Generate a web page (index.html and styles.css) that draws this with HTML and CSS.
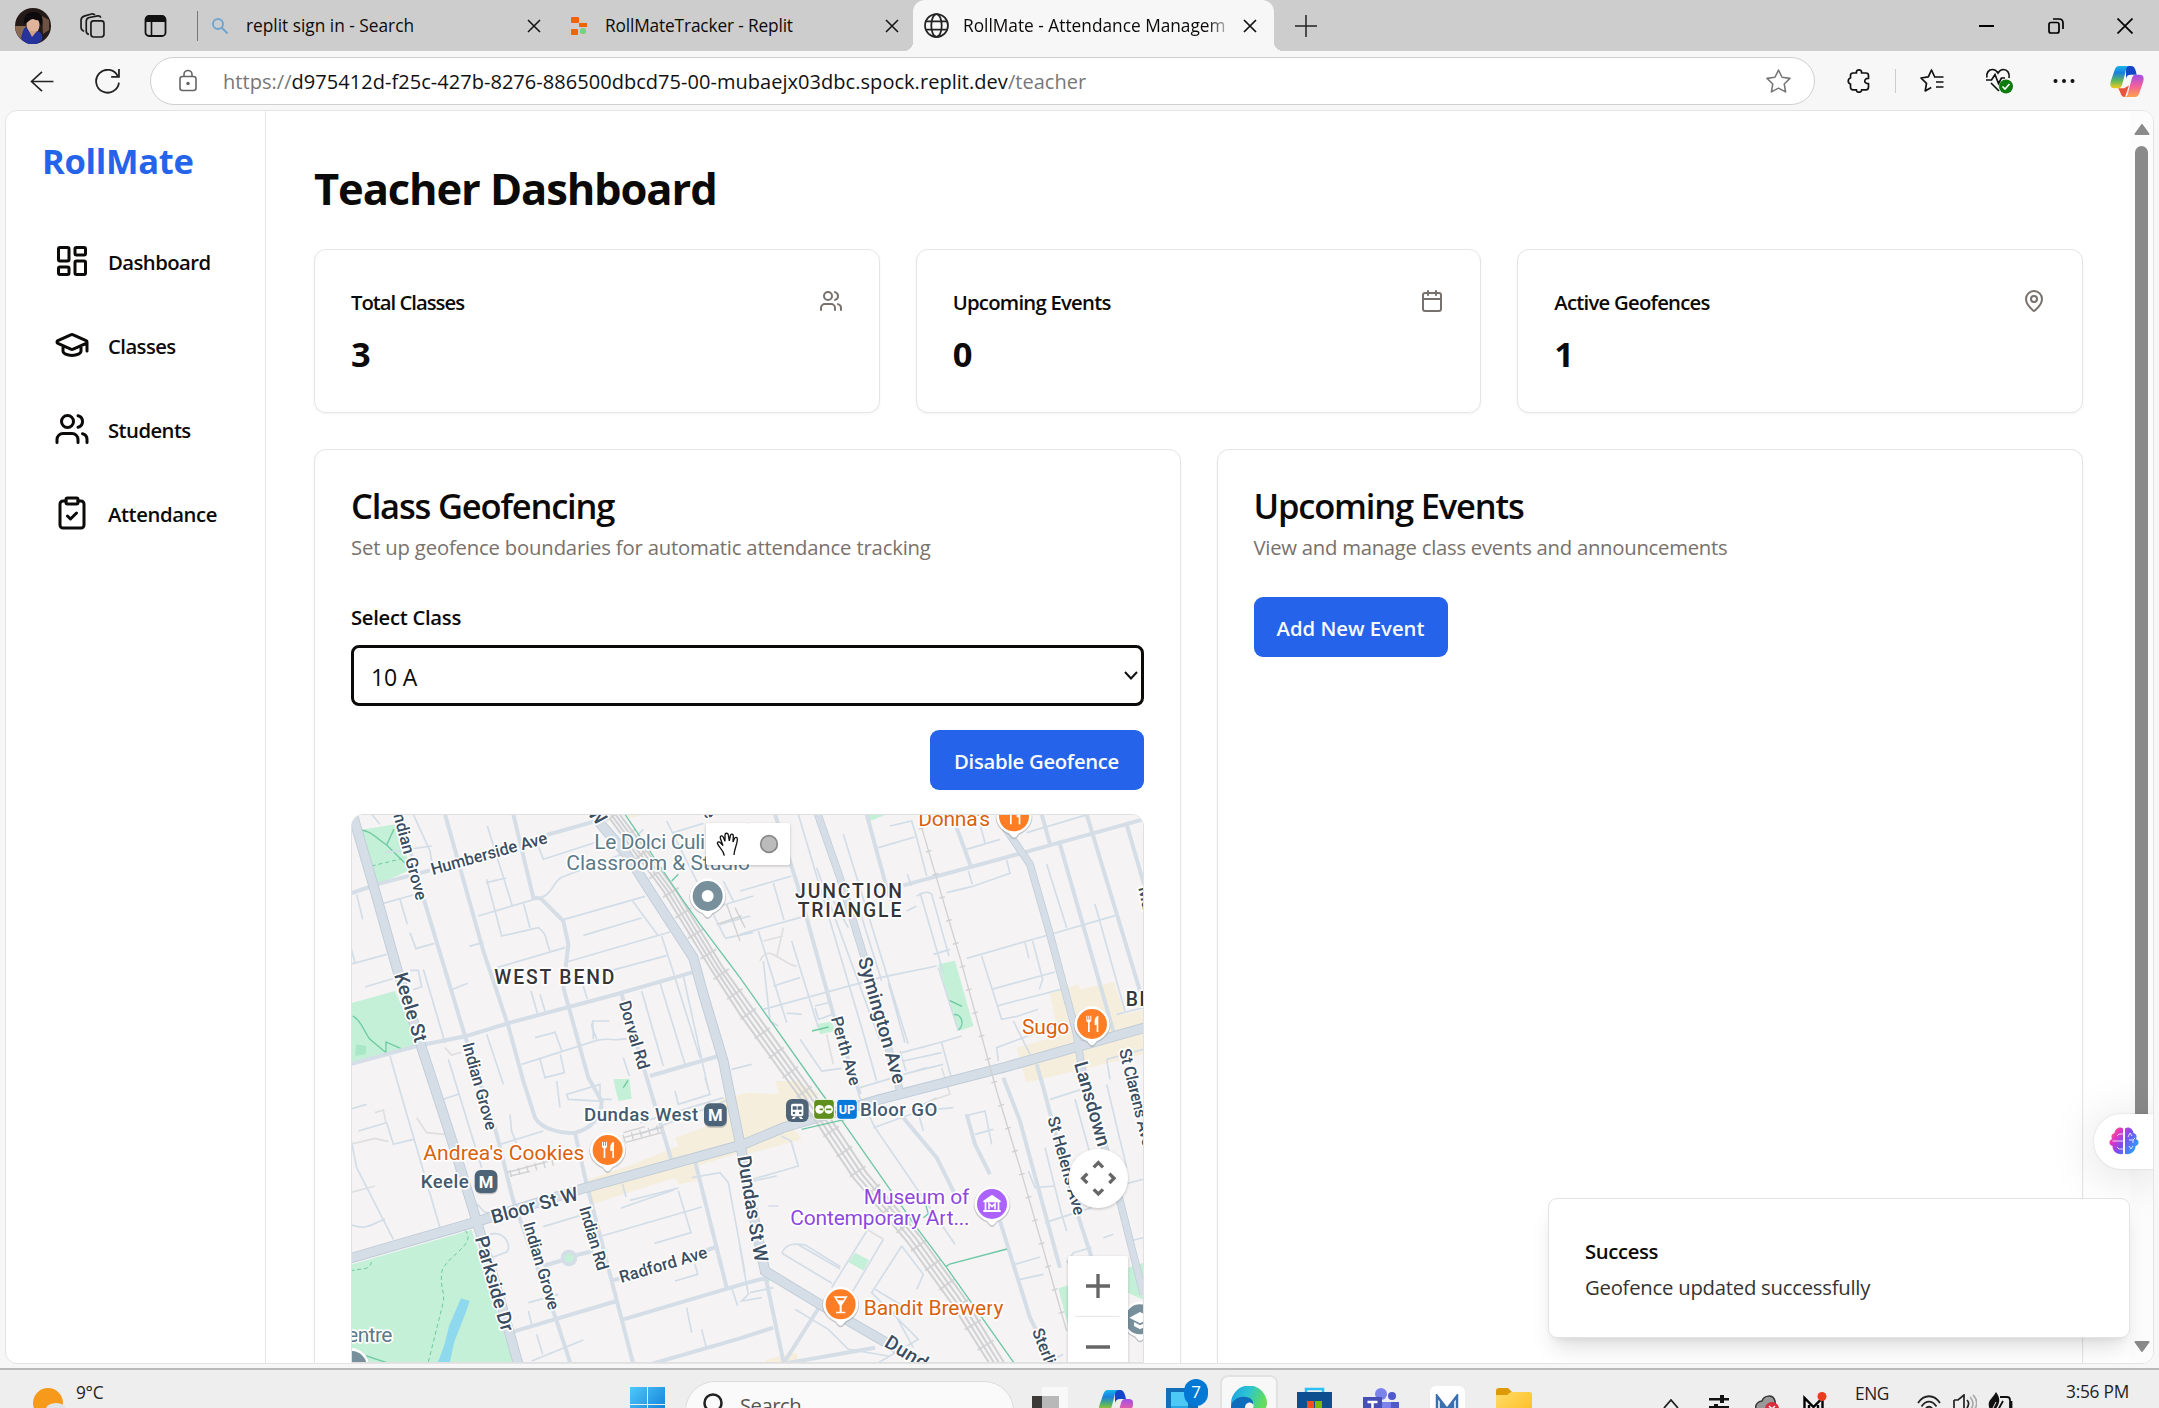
FILE: index.html
```html
<!DOCTYPE html>
<html lang="en">
<head>
<meta charset="utf-8">
<title>RollMate - Attendance Management</title>
<link rel="stylesheet" href="styles.css">
</head>
<body>
<svg class="defs" width="0" height="0">
  <defs>
    <linearGradient id="cpA" x1="0" y1="0" x2="0" y2="1"><stop offset="0" stop-color="#18b5e8"/><stop offset=".3" stop-color="#1a7fe0"/><stop offset=".65" stop-color="#5cb85c"/><stop offset="1" stop-color="#f4c81c"/></linearGradient>
    <linearGradient id="cpB" x1="0" y1="0" x2="0" y2="1"><stop offset="0" stop-color="#a04fe8"/><stop offset=".5" stop-color="#f0609c"/><stop offset="1" stop-color="#ffa14a"/></linearGradient>
    <linearGradient id="brain" x1="0" y1="0" x2="1" y2=".6"><stop offset="0" stop-color="#f98b2b"/><stop offset=".3" stop-color="#e935c1"/><stop offset=".6" stop-color="#7b4df0"/><stop offset="1" stop-color="#2f9bff"/></linearGradient>
    <linearGradient id="win" x1="0" y1="0" x2="1" y2="1"><stop offset="0" stop-color="#4cc8fb"/><stop offset="1" stop-color="#0a74d2"/></linearGradient>
    <linearGradient id="edge" x1="0" y1="0" x2="1" y2=".3"><stop offset="0" stop-color="#1b9de0"/><stop offset=".5" stop-color="#2cc4d4"/><stop offset="1" stop-color="#62dd5c"/></linearGradient>
    <linearGradient id="folder" x1="0" y1="0" x2="1" y2="1"><stop offset="0" stop-color="#ffdc6b"/><stop offset="1" stop-color="#fdb913"/></linearGradient>
    <symbol id="copilot" viewBox="0 0 34 32">
      <path d="M16 0h5c3 0 4 2 5 5l1 4h-6c-3 0-4 1-5 4z" fill="#1546c8"/>
      <path d="M9 0h10c-3 1-3 4-4 8l-3 11c-1 3-2 4-5 4H4c-4 0-5-3-3.500-8L4 5c1-3 2-5 5-5z" fill="url(#cpA)"/>
      <path d="M8 23h6l5-3-4 12c-3 0-4-2-5-5z" fill="#e8553c"/>
      <path d="M26 9h4c4 0 5 3 3.500 8L30 27c-1 3-2 5-5 5H15c3-1 3-4 4-8l3-11c1-3 2-4 4-4z" fill="url(#cpB)"/>
    </symbol>
    <symbol id="users" viewBox="0 0 24 24"><path d="M16 21v-2a4 4 0 0 0-4-4H6a4 4 0 0 0-4 4v2"/><circle cx="9" cy="7" r="4"/><path d="M22 21v-2a4 4 0 0 0-3-3.870M16 3.130a4 4 0 0 1 0 7.750"/></symbol>
    <symbol id="close" viewBox="0 0 14 14"><path d="M1 1l12 12M13 1L1 13"/></symbol>
    <symbol id="fork" viewBox="0 0 46 52"><path d="M6 1v13c0 4 2 6 5 7v29h5V21c3-1 5-3 5-7V1h-3v12h-3V1h-3v12H9V1z" fill="#fff"/><path d="M42 1c-7 2-11 8-11 16v12h6v21h5z" fill="#fff"/></symbol>
    <g id="pin"><path d="M0 66c-7 0-10-7-16-14C-40 42-55 22-55 0A55 55 0 0 1 55 0C55 22 40 42 16 52 10 59 7 66 0 66z" fill="#8a8f94" opacity=".45" transform="translate(0 3)"/><path d="M0 64c-6 0-9-7-15-13C-38 42-53 22-53 0A53 53 0 0 1 53 0C53 22 38 42 15 51 9 57 6 64 0 64z" fill="#fff"/></g>
  </defs>
</svg>

<header class="tabstrip">
  <svg class="avatar" viewBox="0 0 36 36"><circle cx="18" cy="18" r="18" fill="#241a18"/><path d="M0 18a18 18 0 0 0 7 14l4-14z" fill="#8a6a52"/><path d="M27 8l7 4v10l-6 4z" fill="#6d5244"/><ellipse cx="18" cy="17" rx="6.500" ry="9" fill="#e0b49a"/><path d="M9 16c-1-9 4-12 10-12 7 0 10 6 8 14-2-2-3-5-4-6-2 1-3-1-5-1-3 0-4 3-9 5z" fill="#0c0a0c"/><path d="M6 30c2-7 3-12 6-10l5 8 4-5c5 0 7 4 6 9-5 6-15 7-21-2z" fill="#25339a"/><path d="M14 23l3 6 5-6z" fill="#d3a189"/></svg>
  <svg class="workspaces" viewBox="0 0 24 24" fill="none" stroke="#1b1b1b" stroke-width="1.600"><rect x="10.500" y="7.500" width="12.500" height="15.500" rx="2.500"/><path d="M8.500 20.500C6.500 20 6 19 6 17.500V8c0-2 1-3.300 3-3.700l8-1.500c1.500-.2 2.500.4 3 1.700"/><path d="M4 17.500C2 17 1 16 1 14V7c0-2 1-3.300 3-4l7-2c1.600-.3 2.600 0 3.300 1"/></svg>
  <svg class="tabmenu" viewBox="0 0 22 22"><rect x="1" y="1" width="20" height="20" rx="3.500" fill="none" stroke="#111" stroke-width="1.800"/><path d="M1 7V4.500C1 2 2 1 4.500 1h13C20 1 21 2 21 4.500V7z" fill="#111"/><path d="M7 7v14" stroke="#111" stroke-width="1.600"/></svg>
  <i class="strip-div"></i>
  <div class="tab tab1">
    <svg class="fav16" viewBox="0 0 16 16" fill="none" stroke="#6fa5d0" stroke-width="2"><circle cx="6" cy="6" r="5"/><path d="M9.500 9.500l6 6"/></svg>
    <span class="t-tab1">replit sign in - Search</span>
    <svg class="x" stroke="#111" stroke-width="1.500"><use href="#close"/></svg>
  </div>
  <div class="tab tab2">
    <svg class="fav16" viewBox="0 0 16 18"><rect x="0" y="0" width="8" height="6" rx="1" fill="#f26207"/><rect x="8" y="6" width="8" height="4" fill="#f26207"/><rect x="0" y="12" width="7" height="6" rx="1" fill="#f26207"/><rect x="9" y="11" width="6" height="6" rx="2.500" fill="#6bd77c"/></svg>
    <span class="t-tab2">RollMateTracker - Replit</span>
    <svg class="x" stroke="#111" stroke-width="1.500"><use href="#close"/></svg>
  </div>
  <div class="tab tab3">
    <svg class="globe" viewBox="0 0 24 24" fill="none" stroke="#222" stroke-width="1.700"><circle cx="12" cy="12" r="11"/><ellipse cx="12" cy="12" rx="5" ry="11"/><path d="M2 8h20M2 16h20"/></svg>
    <span class="t-tab3">RollMate - Attendance Managem</span>
    <svg class="x" stroke="#111" stroke-width="1.700"><use href="#close"/></svg>
  </div>
  <svg class="plus" viewBox="0 0 22 22" stroke="#222" stroke-width="1.500"><path d="M0 11h22M11 0v22"/></svg>
  <div class="winbtns">
    <svg viewBox="0 0 16 16" stroke="#000" stroke-width="2"><path d="M0 8h15"/></svg>
    <svg viewBox="0 0 16 16" fill="none" stroke="#000" stroke-width="1.700"><rect x="1" y="4.500" width="10" height="10.500" rx="2"/><path d="M5 1h6c3 0 4 1.500 4 4v6"/></svg>
    <svg viewBox="0 0 16 16" stroke="#000" stroke-width="1.700"><path d="M.5.500l15 15M15.500.500l-15 15"/></svg>
  </div>
</header>

<div class="toolbar">
  <svg class="back" viewBox="0 0 24 22" fill="none" stroke="#222" stroke-width="1.700"><path d="M24 11H1M12 1L1 11l11 10"/></svg>
  <svg class="reload" viewBox="0 0 24 24" fill="none" stroke="#222" stroke-width="1.700"><path d="M22 7A11 11 0 1 0 23 13M23 0v7.500h-7.500"/></svg>
  <div class="omnibox">
    <svg class="lock" viewBox="0 0 18 22" fill="none" stroke="#666" stroke-width="1.600"><rect x="1" y="7" width="16" height="14" rx="2.500"/><path d="M5 7V5a4 4 0 0 1 8 0v2"/><circle cx="9" cy="14" r="1" fill="#666"/></svg>
    <span class="url"><em>https://</em>d975412d-f25c-427b-8276-886500dbcd75-00-mubaejx03dbc.spock.replit.dev<em>/teacher</em></span>
    <svg class="star" viewBox="0 0 24 24" fill="none" stroke="#777" stroke-width="1.500" stroke-linejoin="round"><path d="M12 1l3.400 6.900 7.600 1.100-5.500 5.400 1.300 7.600L12 18.400 5.200 22l1.300-7.600L1 9l7.600-1.100z"/></svg>
  </div>
  <svg class="tb puzzle" viewBox="0 0 24 24" fill="none" stroke="#111" stroke-width="1.700" stroke-linejoin="round"><path d="M6 4h3.500c-1-4.200 6-4.200 5 0H19c1.500 0 2.500 1 2.500 2.500V9.500c-5-.8-5 5.800 0 5V18c0 1.800-1 2.800-2.500 2.800h-4.500c.8 3.200-5.800 3.200-5 0H6c-1.500 0-2.500-1-2.500-2.500V15c-3-.6-3-5.400 0-6V6.500C3.500 5 4.500 4 6 4z"/></svg>
  <i class="tb-div"></i>
  <svg class="tb favs" viewBox="0 0 24 24" fill="none" stroke="#111" stroke-width="1.700" stroke-linejoin="round"><path d="M14.500 7.500L11.500 1 8.300 7.900 1 9l5.500 5.400L5.200 22l6-3.500M14 8h9.500M16 13h7.500M16 18h7.500"/></svg>
  <svg class="tb heart" viewBox="0 0 28 26" fill="none" stroke="#111" stroke-width="1.700"><path d="M2 9.500C1 4.500 4 1.500 7.500 1.500c2.500 0 4 1 5.500 3.500 1.500-2.500 3-3.500 5.500-3.500C22 1.500 25 4.500 24 10M6 15l8 8M1 12h5.500L10 6.500l3.500 9L16.500 10H20"/><circle cx="21" cy="18.500" r="7" fill="#0f7b0f" stroke="none"/><path d="M17.500 18.500l2.500 2.500 4.500-5" stroke="#fff" stroke-width="1.600"/></svg>
  <svg class="tb dots" viewBox="0 0 22 22" fill="#111"><circle cx="2.500" cy="11" r="2"/><circle cx="11" cy="11" r="2"/><circle cx="19.500" cy="11" r="2"/></svg>
  <svg class="cop"><use href="#copilot"/></svg>
</div>

<div class="stage">
  <div class="page">
    <aside class="sidebar">
      <div class="logo">RollMate</div>
      <nav>
        <a class="nav"><svg viewBox="0 0 24 24"><rect width="7" height="9" x="3" y="3" rx="1"/><rect width="7" height="5" x="14" y="3" rx="1"/><rect width="7" height="9" x="14" y="12" rx="1"/><rect width="7" height="5" x="3" y="16" rx="1"/></svg><span class="n1">Dashboard</span></a>
        <a class="nav"><svg viewBox="0 0 24 24"><path d="M21.420 10.922a1 1 0 0 0-.019-1.838L12.830 5.180a2 2 0 0 0-1.660 0L2.600 9.080a1 1 0 0 0 0 1.832l8.570 3.908a2 2 0 0 0 1.660 0zM22 10v6M6 12.500V16a6 3 0 0 0 12 0v-3.500"/></svg><span class="n1">Classes</span></a>
        <a class="nav"><svg><use href="#users"/></svg><span class="n1">Students</span></a>
        <a class="nav"><svg viewBox="0 0 24 24"><rect width="8" height="4" x="8" y="2" rx="1"/><path d="M16 4h2a2 2 0 0 1 2 2v14a2 2 0 0 1-2 2H6a2 2 0 0 1-2-2V6a2 2 0 0 1 2-2h2M9 14l2 2 4-4"/></svg><span class="n2">Attendance</span></a>
      </nav>
    </aside>
    <main>
      <h1>Teacher Dashboard</h1>
      <section class="stats">
        <div class="card stat"><div class="stat-h"><span class="s1">Total Classes</span><svg><use href="#users"/></svg></div><b>3</b></div>
        <div class="card stat"><div class="stat-h"><span>Upcoming Events</span><svg viewBox="0 0 24 24"><path d="M8 2v4M16 2v4M3 10h18"/><rect width="18" height="18" x="3" y="4" rx="2"/></svg></div><b>0</b></div>
        <div class="card stat"><div class="stat-h"><span>Active Geofences</span><svg viewBox="0 0 24 24"><path d="M20 10c0 4.993-5.539 10.193-7.399 11.799a1 1 0 0 1-1.202 0C9.539 20.193 4 14.993 4 10a8 8 0 0 1 16 0"/><circle cx="12" cy="10" r="3"/></svg></div><b>1</b></div>
      </section>
      <section class="panels">
        <div class="card panel">
          <h2>Class Geofencing</h2>
          <p class="p1">Set up geofence boundaries for automatic attendance tracking</p>
          <label>Select Class</label>
          <div class="select"><span>10 A</span><svg viewBox="0 0 14 9" fill="none" stroke="#111" stroke-width="2"><path d="M1 1l6 6.500L13 1"/></svg></div>
          <button class="btn disable">Disable Geofence</button>
          <div class="map">
<svg viewBox="3 39 2379 1647" preserveAspectRatio="xMinYMin slice">
<rect x="0" y="0" width="2400" height="1700" fill="#f5f3f4"/>
<g fill="#f6eedc">
<path d="M700 1140L850 1090 985 1035 975 1010 1100 965 1110 890 1200 875 1290 880 1350 840 1372 905 1310 965 1345 1000 1355 1015 1190 1060 1185 1050 1040 1095 1040 1140 985 1150 975 1130 725 1210z"/>
<path d="M2100 578L2185 550 2190 565 2292 543 2325 640 2380 625 2380 760 2050 840 2028 842 2020 810 2000 740 2125 705z"/>
<path d="M1275 840L1340 840 1410 880 1300 920zM1250 1675l90-20 5 30h-95zM828 40h60l-50 12z"/>
</g>
<g fill="#c3f0d6">
<path d="M30 87L135 70 185 205 85 250zM0 608L135 570 212 735 0 792zM0 1392L365 1286 490 1686 0 1686zM790 835l48-2 7 60-40 7zM1765 490l50-11 55 196-45 15zM1555 40h55l-55 22zM1402 668l43-6 10 28-45 10zM2125 1462l45-14-10 150zM2335 1400l45-14v110l-45-20zM1515 1355l42 22-16 32-45-25zM1250 1425l25 5-22 14z"/>
</g>
<path d="M333 1492l26 8-10 30-36 92-14 64h-36l20-54 15-60z" fill="#8fd9ee"/>
<path d="M18 730l30 5v25l-32 5z" fill="#a8e8c6"/>
<g fill="none" stroke="#6cc9a2" stroke-width="4">
<path d="M30 87c30 0 50 25 80 45l55 55M110 132l22-48M8 645c25 10 35 50 52 70l48 40v-32l50 22M820 860l14-22M1798 598l38 18M1808 642c25-10 40 30 15 46M1386 690l50-12M0 1648l110 37"/>
<path d="M65 195l90-22M345 1288c40 40-60 80-70 125-5 50 10 60 5 90l-45 180M0 1410c40-10 60 0 65-30" stroke-dasharray="12 9" stroke-width="3"/>
</g>
<g fill="none" stroke="#d2dde7" stroke-width="5">
<path d="M65 40L90 70M190 40l50 110 5 30M105 155l140-20M20 280l18 75M0 430l15 55M0 490l110-30M100 307l100-28M150 295l22 75M180 395l18 48 55-16M45 558l100-30M180 508h25l10 50-25 8M220 505l65 220M308 565l45-18M358 436l42-12M412 75l75 240M408 245l60-14M385 345l175-52M410 235l45 170 110-25c30 20 20 40 35 70M440 500l205-60M520 305l20 75M555 295c60-10 50-60 90-70l170-65M555 110l25 65 170-55M640 356l245-70M650 483l310-90M700 403l175-52M848 300l75 102M935 405l38 118M785 508l165-44M543 570l20 70M570 580l15 50M700 555l12 40M875 570l65 225M930 545l75 245M975 530l75 240M1000 525l75 340"/>
<path d="M730 715l-2-55h50M740 715c-10-30-20-40-12-50M515 790l225-72c60-10 30 5 90-5M555 710l60-16 22 60M570 775l15 55 58-15-12-55M820 770l18 55M410 700l50 150M1145 805l60-15M0 1000l20 100 110 215M120 765l30 105 120 410M295 775l100 325M25 990l85-25 20 65 60-15M280 895l45-15M0 925l50-15M0 1270c50 20 60 0 105-15M480 940l5 50 15 40M450 1030l130-40M545 1680l155-63M560 1600l18 60M535 1505l90-25M535 1530l10 40"/>
<path d="M745 895h40M650 880l100-30v50l-95-5zM620 840l10 80M975 870l10 40 95-30-15-50M870 1000l280-110M870 965l250-75M840 1198l145-37M812 1222l70-25 90-30M818 1150l10 38M985 1170l38 125-110 32M745 1308l310-90M580 1277l110-33M1025 1130l85-15 25 30 50 270M975 1440l68-20-8-30M1010 1520l15 75M1055 1585l15 60M1145 1460l18 55M420 1300c50-15 70 50 45 55l-40 15M380 1210c20 10 10 30 50 25"/>
<path d="M880 85l-60 60M970 95l90-28M950 60L1100 360l25 50M1110 315l100-30M1120 240l30 60M1110 370l90-25M1125 412l85-18"/>
<path d="M1170 270l155-45M1270 245l32 112M1170 400l190-53M1225 390l85 275M1240 480l20 180 25 15M1270 555l80-25M1240 625l350-95 170-35M1325 420l80 260M1310 637l20 0 25 3M1350 715l65 95 60-8M1395 620l10 35 45-15M1395 615l50-12M1345 40l190 640 45 160M1400 200l190 520M1450 300l45 80M1480 100l195 630M1520 300l75 240M1620 75l65-15 15 50 30 115M1585 140l110-32M1700 285c25-12 35-15 45-5l52 185M1710 275l70 240M1672 220l12 35M1750 460l50-15M1670 330l30-15M1790 275l75-18 115-40-10-40M1855 210l12 40M1850 145l100-30M1890 70l15 55M2030 95l175-52M2090 190l60 190M2235 310l90 320M1850 472l245-70 200-58M1895 465l60 190 50-10 60-20M1925 565l190-52M1940 615l205-53M2025 425l12 48M2048 420l30 115-10 30M1945 780l-5-40 200-75M1990 660l50 100M1655 755l120-32 60-18M1660 780l115-25M1680 815l100-25M1650 750l18 60M1765 500l60 190M1615 545l50 180M1530 860l200-60M1775 725l30 110M2300 640l80-20M2270 775l110-30M2270 775l10 60"/>
<path d="M1525 880l50 100 240 350M1570 980l140-50 100-10M1190 1140l155-45-22-75-30-15M1760 890l-60 30 20 70M1845 945l60-15 20 100M1875 1000l55-15M2100 895l95-30M2035 1110l20 50 60-5M2085 1040l50 200 15 50M2085 1265l140-45M2175 895l55 200M2270 850l60 250M1995 1390l75-22M2010 1435l70-15M2080 1690l60-30M2320 1150l60-15M2260 1310l30-10M2340 1320l40-10M2150 1385l20-30 55-15"/>
<path d="M1296 1357c10-30 40-30 70-25l105 65M1296 1357l150 90M1340 1328l130 75M1550 1290l-105 170M1600 1315l-100 170-55-20M1655 1335l-90 140 140 140-120 70M1655 1335l65 85-20 45M1575 1465l100 60M1335 1525l100 60 60 60 120 20M1630 1530l60 110M1170 1340l25 140-20 20 60-10M1200 1475l70-15M1210 1140l70-15M1255 1215h30"/>
</g>
<g fill="none" stroke="#dedfe0" stroke-width="5"><path d="M75 935l25-8 8 40M200 950l30 45 55 5M0 1030l75-18 40 10M0 1175l75-20M285 740l20 22 28-8M1230 480c25-60 70 15 110 15M1280 470l20-90M1240 420l60-15M1430 700l20 90M1775 800l25 80-60 20M1550 1285l50 30"/></g>
<g fill="none" stroke="#d5dee6" stroke-width="12">
<path d="M0 790L200 735 350 705 480 665 780 585 1035 512M0 278L80 250 240 208M590 102L745 58M150 40L220 290 345 705 440 1000 490 1200 620 1560 662 1690M285 40L400 450 475 675 520 840 555 950C575 985 640 1000 675 995M490 40L550 290 572 292 640 360 655 430 640 560 715 830 755 900C755 950 720 985 675 995L710 1150 850 1690M815 580L965 1080 1035 1080 1130 1460M900 825L1105 765M490 1592L800 1500M820 1555L1175 1450 1250 1430M900 1690L1170 1612 1270 1580M1245 1420L1302 1690M1410 1515L1305 1680M780 1440l30-8M1060 1350l40-12M580 1395l60-18M680 1362l50-12"/>
<path d="M1275 40L1345 260 1450 640 1530 880M1550 40L1610 260 1625 300M1660 253L2020 155 2380 55M1820 80L1862 195M2075 40L2100 130M2130 130L2290 690M2210 40L2370 570M2330 70L2382 250M1960 830L2010 960 2130 1400M2060 790L2080 860 2170 1200 2225 1370M1660 950L1760 1070 1815 1180M1850 940L1875 1030 1920 1120M1950 1260L1990 1390 2040 1550 2110 1690M1290 1690L1575 1640"/>
</g>
<g fill="none" stroke="#bdcad6"><path stroke-width="31" d="M5 30L75 270 140 500 215 740 300 1000 380 1260 440 1460 505 1690M740 55L830 160 900 270 1030 470 1060 580 1120 780 1140 880 1172 1035 1210 1240 1245 1410 1410 1510 1600 1620 1740 1700M0 1372L380 1262 690 1165 1180 1030 1300 980 1590 895 1970 797 2385 680"/><path stroke-width="23" d="M1400 30L1470 230 1540 460 1650 870M1965 80L2040 190 2100 400 2180 700 2195 800 2310 1200 2380 1480"/></g>
<g fill="none" stroke="#d5dee6" stroke-linejoin="round"><path stroke-width="26" d="M5 30L75 270 140 500 215 740 300 1000 380 1260 440 1460 505 1690M740 55L830 160 900 270 1030 470 1060 580 1120 780 1140 880 1172 1035 1210 1240 1245 1410 1410 1510 1600 1620 1740 1700M0 1372L380 1262 690 1165 1180 1030 1300 980 1590 895 1970 797 2385 680"/><path stroke-width="19" d="M1400 30L1470 230 1540 460 1650 870M1965 80L2040 190 2100 400 2180 700 2195 800 2310 1200 2380 1480"/></g>
<circle cx="657" cy="1371" r="19" fill="#c3f0d6" stroke="#d5dee6" stroke-width="12"/>
<g fill="none" stroke="#d0d1d2" stroke-width="6">
<path d="M770 40L940 270 1080 500 1170 640 1350 890 1510 1130 1670 1320 1800 1500 1920 1690M783 40L953 270 1093 500 1183 635 1363 885 1523 1125 1683 1315 1813 1495 1935 1690M796 40L966 270 1106 500 1196 630 1376 880 1536 1120 1696 1310 1826 1490 1950 1690M809 40L979 270 1119 500 1209 625 1389 875 1549 1115 1709 1305 1839 1485 1965 1690"/>
<path stroke-width="56" stroke-dasharray="6 66" opacity=".8" d="M790 40L960 270 1100 500 1190 632 1370 882 1530 1122 1690 1312 1820 1492 1942 1690"/>
<g stroke-width="4"><path d="M1715 80L1830 470 1940 870 2010 1100 2150 1590"/><path stroke-width="18" stroke-dasharray="4 68" d="M1715 80L1830 470 1940 870 2010 1100 2150 1590"/>
<path d="M470 1115l140-38M480 1125l60-14M820 1010l120-32M825 1025l110-30M820 995l65-18M1100 370l75-25M1130 310l40 110M1155 320l30 60"/>
<path stroke-width="22" stroke-dasharray="4 22" d="M480 1118l130-35M820 1012l120-32"/></g>
</g>
<path d="M825 40L990 285 1050 370 1170 530 1410 870 1480 965 1700 1280 1790 1400 1995 1690M1787 1397l12-8 172-45M1355 985l130-30M965 240l20-20M1720 1250l15-12-18-60" fill="none" stroke="#6fc7a5" stroke-width="4"/>

<g class="lbl road">
<text class="sm" transform="translate(248 222) rotate(-15.500)" textLength="360">Humberside Ave</text>
<text class="sm" transform="translate(126 28) rotate(75)" textLength="282">Indian Grove</text>
<text class="lg" transform="translate(132 522) rotate(73)" textLength="215">Keele St</text>
<text class="sm" transform="translate(337 730) rotate(74.500)" textLength="270">Indian Grove</text>
<text class="sm" transform="translate(806 605) rotate(73.500)" textLength="212">Dorval Rd</text>
<text class="lg" transform="translate(1523 475) rotate(74)" textLength="392">Symington Ave</text>
<text class="sm" transform="translate(1442 652) rotate(74)" textLength="213">Perth Ave</text>
<text class="lg" transform="translate(2172 788) rotate(74)" textLength="262">Lansdown</text>
<text class="sm" transform="translate(2307 748) rotate(76)" textLength="300">St Clarens Ave</text>
<text class="sm" transform="translate(2092 952) rotate(74.500)" textLength="304">St Helens Ave</text>
<text class="lg" transform="translate(430 1268) rotate(-15.500)" textLength="268">Bloor St W</text>
<text class="lg" transform="translate(374 1312) rotate(74)" textLength="294">Parkside Dr</text>
<text class="sm" transform="translate(519 1268) rotate(73.500)" textLength="273">Indian Grove</text>
<text class="sm" transform="translate(687 1222) rotate(73.500)" textLength="198">Indian Rd</text>
<text class="sm" transform="translate(814 1446) rotate(-16.500)" textLength="272">Radford Ave</text>
<text class="lg" transform="translate(1162 1068) rotate(80.500)" textLength="322">Dundas St W</text>
<text class="lg" transform="translate(1600 1634) rotate(32)" textLength="140">Dund</text>
<text class="sm" transform="translate(2045 1590) rotate(68)" textLength="112">Sterli</text>
<text class="lg" transform="translate(710 38) rotate(48)">W</text>
<text class="sm" transform="translate(1059 30) rotate(70)">e</text>
<text class="sm" transform="translate(2365 260) rotate(78)">Ma</text>
</g>
<g class="lbl area">
<text x="433" y="549" textLength="365">WEST BEND</text>
<text x="1335" y="290" textLength="326">JUNCTION</text>
<text x="1343" y="349" textLength="316">TRIANGLE</text>
<text x="2327" y="614">BL</text>
</g>
<g class="lbl poi teal"><text x="733" y="144" textLength="332">Le Dolci Culi</text><text x="649" y="206" textLength="551">Classroom &amp; Studio</text><text x="-8" y="1622" textLength="135">entre</text></g>
<g class="lbl poi orange"><text x="1705" y="76" textLength="215">Donna's</text><text x="2016" y="699" textLength="142">Sugo</text><text x="220" y="1077" textLength="483">Andrea's Cookies</text><text x="1541" y="1542" textLength="419">Bandit Brewery</text></g>
<g class="lbl poi purple"><text x="1541" y="1210" textLength="317">Museum of</text><text x="1321" y="1272" textLength="538">Contemporary Art...</text></g>
<g class="lbl station"><text x="702" y="961" textLength="343">Dundas West</text><text x="212" y="1160" textLength="144">Keele</text><text x="1530" y="944" textLength="232">Bloor GO</text></g>
<g id="metro"><rect x="375" y="1110" width="68" height="70" rx="18" fill="#999" opacity=".6"/><rect x="374" y="1107" width="68" height="69" rx="18" fill="#4d6478"/><text class="mm" x="408" y="1160">M</text></g>
<use href="#metro" x="688" y="-200"/>
<rect x="1308" y="894" width="68" height="69" rx="18" fill="#4d6478"/><rect x="1323" y="908" width="37" height="38" rx="6" fill="#fff"/><path d="M1328 916h12v10h-12zM1343 916h12v10h-12z" fill="#4d6478"/><circle cx="1332" cy="936" r="4" fill="#4d6478"/><circle cx="1351" cy="936" r="4" fill="#4d6478"/><path d="M1330 947h8l-5 7h-8zM1346 947h8l5 7h-8z" fill="#fff"/>
<rect x="1391" y="895" width="62" height="60" rx="10" fill="#5f8f1c" stroke="#fff" stroke-width="3"/><circle cx="1409" cy="925" r="13" fill="#fff"/><circle cx="1436" cy="925" r="13" fill="#fff"/><path d="M1409 925h10M1428 925h16" stroke="#5f8f1c" stroke-width="5"/>
<rect x="1460" y="895" width="62" height="60" rx="10" fill="#0479d9" stroke="#fff" stroke-width="3"/><text class="up" x="1491" y="938">UP</text>
<g transform="translate(1073 285)"><use href="#pin"/><circle r="45" fill="#78909c"/><circle r="18" fill="#fff"/></g>
<g transform="translate(1992 46)"><use href="#pin"/><circle r="45" fill="#ff7e25"/><use href="#fork" x="-23" y="-26" width="46" height="52"/></g>
<g transform="translate(2226 669)"><use href="#pin"/><circle r="45" fill="#ff7e25"/><use href="#fork" x="-23" y="-26" width="46" height="52"/></g>
<g transform="translate(773 1047)"><use href="#pin"/><circle r="45" fill="#ff7e25"/><use href="#fork" x="-23" y="-26" width="46" height="52"/></g>
<g transform="translate(1472 1510)"><use href="#pin"/><circle r="45" fill="#ff7e25"/><path d="M-21-24h42L3 4v18h11v5h-28v-5h11V4zM-12-19l4 7H8l4-7z" fill="#fff" fill-rule="evenodd"/></g>
<g transform="translate(1926 1209)"><use href="#pin"/><circle r="45" fill="#ab62ff"/><path d="M-26-10L0-28l26 18v5h-4v23h4v6h-52v-6h4V-5h-4zM-17-5v23h34V-5z" fill="#fff" fill-rule="evenodd"/><path d="M-9 16V-1l9 9 9-9v17" fill="none" stroke="#fff" stroke-width="5"/></g>
<g transform="translate(2370 1555)"><use href="#pin"/><circle r="45" fill="#78909c"/><path d="M-32-5L0-22l32 17L0 12zM-18 8L0 18l18-10v12L0 30l-18-10z" fill="#fff"/></g>
<g transform="translate(5 1695)"><use href="#pin"/><circle r="45" fill="#78909c"/></g>
<g class="ctl"><rect x="1068" y="66" width="126" height="126" rx="5"/><rect x="1194" y="66" width="126" height="126" rx="5"/><circle cx="2245" cy="1132" r="89"/><rect x="2154" y="1365" width="180" height="400" rx="5"/></g>
<path d="M1123 164c-2-16-12-20-19-33-5-8 2-11 8-5l7 8-8-22c-2-8 6-10 9-3l5 12V102c0-7 9-7 10 0l3 18 3-16c2-7 10-5 9 2l-1 17 4-10c3-7 10-4 9 3-1 16-9 28-10 46" fill="none" stroke="#111" stroke-width="4"/>
<circle cx="1257" cy="129" r="25" fill="#bbb" stroke="#888" stroke-width="5"/>
<g fill="none" stroke="#666" stroke-width="10"><path d="M2231 1099l14-14 14 14M2231 1165l14 14 14-14M2212 1118l-14 14 14 14M2278 1118l14 14-14 14M2208 1455h72M2244 1419v72M2208 1638h72"/></g>
<path d="M2175 1546h134" stroke="#e6e6e6" stroke-width="3"/>
</svg>
          </div>
        </div>
        <div class="card panel">
          <h2 class="h2b">Upcoming Events</h2>
          <p class="p2">View and manage class events and announcements</p>
          <button class="btn add">Add New Event</button>
        </div>
      </section>
    </main>
    <div class="scroll">
      <svg class="up-a" viewBox="0 0 16 11"><path d="M8 1l6.500 9h-13z" fill="#8a8a8a" stroke="#8a8a8a" stroke-linejoin="round" stroke-width="2"/></svg>
      <i class="thumb"></i>
      <svg class="dn-a" viewBox="0 0 16 11"><path d="M8 10l6.500-9h-13z" fill="#8a8a8a" stroke="#8a8a8a" stroke-linejoin="round" stroke-width="2"/></svg>
    </div>
    <div class="brain"><svg viewBox="0 0 30 28"><path d="M14 1.500C10-1 6 2 5.500 6 2 7 2 10 3 12-1 14 0 18 3.500 19c0 5 4 9 10.500 8zM16 1.500c4-2.500 8 .5 8.500 4.500C28 7 28 10 27 12c4 2 3 6-.5 7 0 5-4 9-10.500 8z" fill="url(#brain)"/><path d="M14 7h-4l-2 2M3.500 14H14M14 22h-4l-2-2M19 10l2-4M23 9l-2-3M20 13h4l2-2M24 13v3M20 19l2 3M24 19l-2 3" fill="none" stroke="#fff" stroke-width="1" opacity=".8"/></svg></div>
    <div class="toast"><strong>Success</strong><span>Geofence updated successfully</span></div>
  </div>
</div>

<footer class="taskbar">
  <svg class="sun" viewBox="0 0 34 22"><circle cx="17" cy="16" r="15" fill="#f79a1c"/><ellipse cx="25" cy="22" rx="10" ry="6" fill="#dfe5ec"/></svg>
  <span class="temp">9°C</span>
  <svg class="ti win" viewBox="0 0 35 35"><path d="M0 0h17v17H0zM18 0h17v17H18zM0 18h17v17H0zM18 18h17v17H18z" fill="url(#win)"/></svg>
  <div class="search"><svg viewBox="0 0 22 26" fill="none" stroke="#222" stroke-width="2.500"><circle cx="11" cy="10" r="8.500"/><path d="M5 17l-4 7"/></svg><span>Search</span></div>
  <svg class="ti tview" viewBox="0 0 36 36"><rect x="10" y="0" width="26" height="26" fill="#f8f8f8"/><rect x="0" y="9" width="27" height="27" fill="#3c3a38"/><rect x="10" y="9" width="17" height="27" fill="#b8b8b8"/></svg>
  <svg class="ti copl"><use href="#copilot"/></svg>
  <div class="phone"><svg viewBox="0 0 32 32"><path d="M0 0h32v32H0z" fill="#1270b8"/><path d="M5 4h17v28H5z" fill="#27a6e6"/><path d="M5 4h17v14H5z" fill="#4cc9f5"/></svg><b>7</b></div>
  <div class="edge-tile"><svg viewBox="0 0 36 36"><path d="M0 18A18 18 0 0 1 36 17c0 6-5 9-10 9-4 0-5-2-4-4 2-4-1-8-6-8C8 14 2 17 0 24z" fill="url(#edge)"/><path d="M0 22c0-8 8-12 14-11 5 0 9 3 8 8 0-3-7-4-8 2-1 7 4 12 9 14C12 38 0 32 0 22z" fill="#0f6cbd"/></svg></div>
  <svg class="ti store" viewBox="0 0 35 35"><path d="M9 8V2h17v6" fill="none" stroke="#2cc0f5" stroke-width="2.500"/><path d="M0 5h35v30H0z" fill="#0f4f8f"/><path d="M10 14h7v8h-7z" fill="#f25022"/><path d="M18 14h7v8h-7z" fill="#7fba00"/><path d="M10 23h7v8h-7z" fill="#00a4ef"/><path d="M18 23h7v8h-7z" fill="#ffb900"/></svg>
  <svg class="ti teams" viewBox="0 0 36 35"><circle cx="18" cy="6" r="6" fill="#7b83eb"/><circle cx="29" cy="8" r="4" fill="#5059c9"/><path d="M18 14h18v21H18z" fill="#7b83eb"/><path d="M28 14h8v21h-8z" fill="#5059c9"/><path d="M0 9h19v26H0z" fill="#464eb8"/><path d="M4.500 14h10M9.500 14v12" stroke="#fff" stroke-width="2.500"/></svg>
  <div class="mtile"><svg viewBox="0 0 24 22"><path d="M2 22V2l10 13L22 2v20M6 22V10l6 9 6-9v12" fill="none" stroke="#3c6fb0" stroke-width="2.500"/></svg></div>
  <svg class="ti fold" viewBox="0 0 36 34"><path d="M0 12V3c0-2 1-3 3-3h9l4 4-3 8z" fill="#dd9a08"/><path d="M0 7h11l4-3h19c1 0 2 1 2 2v28H0z" fill="url(#folder)"/></svg>
  <svg class="ti chev" viewBox="0 0 16 10" fill="none" stroke="#222" stroke-width="1.800"><path d="M1 9l7-8 7 8"/></svg>
  <svg class="ti slid" viewBox="0 0 20 14" fill="#111"><path d="M0 3h20v2.500H0zM11 0h4v8h-4zM0 11h20v2.500H0zM5 9h4v5H5z"/></svg>
  <svg class="ti cloud" viewBox="0 0 26 16"><path d="M1 16C-1 9 4 6 7 6 9 0 18-1 20 6l1 10z" fill="#999" stroke="#333" stroke-width="1.500"/><circle cx="17" cy="14" r="7" fill="#d92b3a"/><path d="M14 11l6 6M20 11l-6 6" stroke="#fff" stroke-width="1.500"/></svg>
  <svg class="ti mred" viewBox="0 0 25 18"><path d="M1.500 18V6l9 9 9-9v12M6 18v-5M15 18v-5" fill="none" stroke="#000" stroke-width="2.400"/><circle cx="19" cy="4.500" r="4.500" fill="#f03a20"/></svg>
  <span class="eng">ENG</span>
  <svg class="ti wifi" viewBox="0 0 24 14" fill="none" stroke="#222" stroke-width="1.800"><path d="M1 8C7-1 17-1 23 8M4.500 11.500c4.500-6.500 10.500-6.500 15 0M8.500 14c2-3 5-3 7 0"/></svg>
  <svg class="ti spk" viewBox="0 0 24 16" fill="none" stroke="#222" stroke-width="1.700"><path d="M1 6h4l6-5v17M1 6v9M14 6c2 2 2 5 0 8"/><path d="M17 3c4 4 4 9 0 13M20 1c5 5 5 11 0 16" stroke="#aaa"/></svg>
  <svg class="ti bat" viewBox="0 0 26 18"><path d="M2 18C-2 8 4 8 8 0c5 7 4 11-1 18z" fill="#111"/><path d="M4 18l4-8" stroke="#eee"/><path d="M12 5h7c2 0 3 1 3 3v10M10 18l5-9M23.500 9v7" fill="none" stroke="#111" stroke-width="1.800"/></svg>
  <span class="time">3:56 PM</span>
</footer>
</body>
</html>
```
FILE: styles.css
```css
* { box-sizing: border-box; }
html, body { margin: 0; height: 100%; overflow: hidden; }
body {
  width: 2159px; height: 1408px;
  display: flex; flex-direction: column;
  background: #f7f7f7; color: #0c0a09;
  font-family: "Open Sans", "Noto Sans", sans-serif;
}
svg { display: block; flex: none; }
span { white-space: nowrap; }
.defs { position: absolute; }

/* tab strip */
.tabstrip { flex: none; height: 51px; background: #cdcdcd; display: flex; align-items: center; padding-left: 15px; font-size: 17.3px; }
.avatar { width: 36px; height: 36px; }
.workspaces { width: 25px; height: 25px; margin-left: 29px; }
.tabmenu { width: 23px; height: 22px; margin-left: 39px; }
.strip-div { width: 1px; height: 30px; background: #777; margin-left: 30px; }
.tab { display: flex; align-items: center; height: 51px; }
.tab .x { width: 14px; height: 14px; margin-left: auto; }
.fav16 { width: 16px; height: 18px; }
.tab1 { width: 344px; padding-left: 14px; padding-right: 1px; }
.tab1 span { margin-left: 18px; }
.tab2 { width: 371px; padding: 0 14px 0 29px; }
.tab2 span { margin-left: 18px; letter-spacing: -.15px; }
.tab3 { position: relative; width: 361px; background: #f7f7f7; border-radius: 12px 12px 0 0; padding: 0 17px 0 11px; }
.tab3::before, .tab3::after { content: ""; position: absolute; bottom: 0; width: 9px; height: 9px; }
.tab3::before { left: -9px; background: radial-gradient(circle at 0 0, transparent 9px, #f7f7f7 9px); }
.tab3::after { right: -9px; background: radial-gradient(circle at 100% 0, transparent 9px, #f7f7f7 9px); }
.globe { width: 25px; height: 25px; }
.tab3 span { margin-left: 14px; -webkit-mask-image: linear-gradient(90deg, #000 245px, transparent 270px); mask-image: linear-gradient(90deg, #000 245px, transparent 270px); }
.plus { width: 22px; height: 22px; margin-left: 21px; }
.winbtns { margin-left: auto; margin-right: 26px; display: flex; gap: 53px; }
.winbtns svg { width: 16px; height: 16px; }

/* toolbar */
.toolbar { flex: none; height: 59px; display: flex; align-items: center; padding: 1px 15px 0 30px; }
.back { width: 24px; height: 21px; }
.reload { width: 25px; height: 25px; margin-left: 41px; }
.omnibox { width: 1665px; height: 48px; margin-left: 30px; border: 1.500px solid #cfcfcf; border-radius: 24px; background: #fff; display: flex; align-items: center; padding: 0 23px 0 28px; }
.lock { width: 18px; height: 23px; margin-top: -2px; }
.url { margin-left: 26px; font-size: 20px; letter-spacing: .04px; color: #111; }
.url em { font-style: normal; color: #777; }
.star { width: 25px; height: 25px; margin-left: auto; }
.tb { width: 24px; height: 24px; }
.puzzle { margin-left: 32px; }
.tb-div { width: 1px; height: 24px; background: #ccc; margin-left: 24px; }
.favs { margin-left: 24px; }
.heart { width: 28px; height: 26px; margin-left: 41px; }
.dots { width: 22px; height: 22px; margin-left: 40px; }
.cop { width: 34px; height: 31px; margin-left: auto; }

/* page frame */
.stage { flex: none; height: 1258px; padding: 0 5px 4px 5px; }
.page { position: relative; height: 1254px; display: flex; background: #fff; border: 1px solid #e4e4e4; border-radius: 12px; overflow: hidden; }
.sidebar { flex: none; width: 260px; border-right: 1px solid #e5e5e5; padding: 26px 0 0 36px; }
.logo { height: 48px; line-height: 48px; font-size: 34.5px; font-weight: 700; color: #2563eb; letter-spacing: -.3px; }
nav { margin-top: 47px; display: flex; flex-direction: column; gap: 24px; }
.nav { display: flex; align-items: center; height: 60px; gap: 18px; padding-left: 12px; font-size: 20.3px; font-weight: 600; letter-spacing: -.56px; }
.nav svg { width: 36px; height: 36px; margin-top: -2px; fill: none; stroke: #0c0a09; stroke-width: 2; stroke-linecap: round; stroke-linejoin: round; }
.n2 { letter-spacing: -.41px; }
main { flex: 1; padding: 48px 47px 0 48px; min-width: 0; }
h1 { margin: 0 0 30px; height: 60px; line-height: 60px; font-size: 43.5px; font-weight: 700; letter-spacing: -1.120px; }
.card { border: 1px solid #e5e5e5; border-radius: 12px; background: #fff; box-shadow: 0 1px 3px rgba(0,0,0,.05); }
.stats { display: grid; grid-template-columns: repeat(3, minmax(0, 1fr)); gap: 36px; }
.stat { height: 164px; padding: 36px; }
.stat-h { display: flex; justify-content: space-between; align-items: center; height: 30px; font-size: 20.3px; font-weight: 600; letter-spacing: -.75px; }
.stat-h span { padding-top: 2px; }
.s1 { letter-spacing: -1.010px; }
.stat-h svg { width: 24px; height: 24px; fill: none; stroke: #78716c; stroke-width: 2; stroke-linecap: round; stroke-linejoin: round; }
.stat b { display: block; margin-top: 14px; font-size: 34.5px; line-height: 48px; }
.panels { display: grid; grid-template-columns: repeat(2, minmax(0, 1fr)); gap: 36px; margin-top: 36px; }
.panel { height: 1000px; padding: 38px 36px; display: flex; flex-direction: column; align-items: flex-start; }
h2 { margin: 0; line-height: 36px; font-size: 34.5px; font-weight: 600; letter-spacing: -1.180px; }
.panel p { margin: 8px 0 0; line-height: 30px; font-size: 20.3px; color: #78716c; white-space: nowrap; }
.p1 { letter-spacing: -.18px; }
.p2 { letter-spacing: -.26px; }
label { margin-top: 40px; line-height: 30px; font-size: 20.3px; font-weight: 600; letter-spacing: -.3px; }
.select { align-self: stretch; margin-top: 13px; height: 61px; border: 3px solid #0c0a09; border-radius: 8px; display: flex; align-items: center; justify-content: space-between; padding: 2px 3px 0 17px; font-size: 23px; letter-spacing: -.2px; }
.select svg { width: 14px; height: 9px; margin-top: -2px; }
.btn { border: 0; border-radius: 9px; height: 60px; background: #2563eb; color: #f8fafc; font: 600 20.3px "Open Sans", sans-serif; padding: 2px 0 0; white-space: nowrap; }
.disable { width: 214px; align-self: flex-end; margin-top: 24px; letter-spacing: -.3px; }
.add { width: 194px; margin-top: 35px; }
.map { align-self: stretch; flex: none; height: 549px; margin-top: 24px; border: 1px solid #e0e0e0; border-radius: 12px 12px 0 0; overflow: hidden; }
.map > svg { width: 793px; height: 549px; margin: -1px 0 0 -1px; }

/* map labels */
.lbl { font-family: Roboto, sans-serif; paint-order: stroke; stroke: #fff; stroke-width: 10px; stroke-linejoin: round; }
.road { fill: #3a4d61; font-weight: 500; }
.sm { font-size: 50px; }
.lg { font-size: 58px; }
.area { fill: #333538; font-size: 58px; font-weight: 500; letter-spacing: 5px; }
.poi { font-size: 63px; }
.teal { fill: #5c7a89; }
.orange { fill: #d9620e; }
.purple { fill: #8d48dc; }
.station { fill: #455a6e; font-size: 56px; font-weight: 500; }
.mm { font: 700 50px Roboto, sans-serif; fill: #fff; text-anchor: middle; }
.up { font: 700 38px Roboto, sans-serif; fill: #fff; text-anchor: middle; }
.ctl { fill: #fff; filter: drop-shadow(0 3px 5px rgba(0,0,0,.22)); }

/* scrollbar, floating widgets */
.scroll { flex: none; width: 23px; background: #fcfcfc; display: flex; flex-direction: column; align-items: center; padding: 13px 0 11px 0; }
.scroll svg { width: 16px; height: 11px; }
.thumb { width: 13px; height: 990px; margin-top: 11px; border-radius: 7px; background: #8a8a8a; }
.dn-a { margin-top: auto; }
.brain { position: absolute; right: -1px; top: 1003px; width: 60px; height: 55px; background: #fff; border-radius: 27px 0 0 27px; box-shadow: 0 6px 50px rgba(0,0,0,.14), 0 0 2px rgba(0,0,0,.15); padding: 13px 0 0 15px; }
.brain svg { width: 30px; height: 28px; }
.toast { position: absolute; left: 1542px; top: 1087px; width: 582px; height: 140px; border: 1px solid #e3e3e3; border-radius: 9px; background: #fff; box-shadow: 0 15px 22px -5px rgba(0,0,0,.12), 0 6px 9px -6px rgba(0,0,0,.1); padding: 37px 36px; display: flex; flex-direction: column; gap: 6px; line-height: 30px; font-size: 20.3px; letter-spacing: -.24px; }
.toast strong { font-weight: 600; letter-spacing: -.37px; }
.toast span { color: #333; }

/* taskbar */
.taskbar { flex: none; height: 40px; border-top: 2px solid #b9b9b9; background: #eee; display: flex; align-items: flex-start; overflow: hidden; font-size: 17.3px; color: #222; line-height: 24px; }
.ti { flex: none; }
.sun { width: 34px; height: 22px; margin: 17px 0 0 31px; }
.temp { width: 32px; margin: 11px 0 0 11px; letter-spacing: -.3px; }
.win { width: 35px; height: 35px; margin: 17px 0 0 522px; }
.search { flex: none; width: 329px; height: 60px; margin: 11px 0 0 20px; border: 1.500px solid #dcdcdc; border-radius: 30px; background: #fafafa; display: flex; align-items: flex-start; padding: 11px 0 0 16px; }
.search svg { width: 22px; height: 26px; }
.search span { margin: -3px 0 0 16px; font-size: 20.3px; letter-spacing: -.5px; color: #555; line-height: 30px; }
.tview { width: 36px; height: 36px; margin: 17px 0 0 18px; }
.copl { width: 34px; height: 34px; margin: 19px 0 0 31px; }
.phone { position: relative; flex: none; width: 32px; margin: 18px 0 0 33px; }
.phone b { position: absolute; left: 18px; top: -9px; width: 24px; height: 27px; border-radius: 14px; background: #0078d4; color: #fff; font-weight: 400; font-size: 17px; line-height: 26px; text-align: center; }
.edge-tile { flex: none; width: 58px; height: 60px; margin: 5px 0 0 22px; border: 2px solid #e2e2e2; border-radius: 8px; background: #f8f8f8; padding: 9px; }
.edge-tile svg { width: 36px; height: 36px; }
.store { width: 35px; height: 35px; margin: 17px 0 0 19px; }
.teams { width: 36px; height: 35px; margin: 18px 0 0 31px; }
.mtile { flex: none; width: 35px; height: 36px; margin: 16px 0 0 31px; background: #fff; border-radius: 6px; padding: 8px 5px; }
.mtile svg { width: 24px; height: 22px; }
.fold { width: 36px; height: 34px; margin: 18px 0 0 31px; }
.chev { width: 16px; height: 10px; margin: 29px 0 0 131px; }
.slid { width: 20px; height: 14px; margin: 25px 0 0 30px; }
.cloud { width: 26px; height: 16px; margin: 25px 0 0 26px; }
.mred { width: 25px; height: 18px; margin: 22px 0 0 22px; }
.eng { margin: 12px 0 0 27px; width: 36px; letter-spacing: -.4px; }
.wifi { width: 24px; height: 14px; margin: 25px 0 0 26px; }
.spk { width: 24px; height: 16px; margin: 24px 0 0 12px; }
.bat { width: 26px; height: 18px; margin: 22px 0 0 11px; }
.time { margin: 10px 0 0 52px; letter-spacing: -.23px; }
```
